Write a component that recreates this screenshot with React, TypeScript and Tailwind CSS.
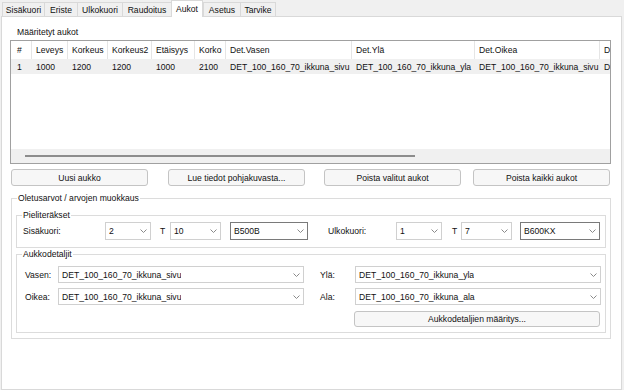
import React from "react";

const Chevron = () => (
  <svg width="7" height="4" viewBox="0 0 7 4" className="shrink-0">
    <polyline points="0.5,0.5 3.5,3.5 6.5,0.5" fill="none" stroke="#8a8a8a" strokeWidth="1" />
  </svg>
);

function Combo({ value, className, dark }: { value: string; className: string; dark?: boolean }) {
  return (
    <div
      className={`flex items-center justify-between bg-white border pl-[3px] pr-[3px] ${
        dark ? "border-[#7a7a7a]" : "border-[#d0d0d0]"
      } ${className}`}
    >
      <span className="truncate">{value}</span>
      <Chevron />
    </div>
  );
}

function Btn({ label, className }: { label: string; className: string }) {
  return (
    <div
      className={`flex items-center justify-center bg-[#f7f7f7] border border-[#c4c4c4] rounded-[3px] ${className}`}
    >
      {label}
    </div>
  );
}

const tabs: { label: string; w: string; sel?: boolean }[] = [
  { label: "Sisäkuori", w: "w-[42px]" },
  { label: "Eriste", w: "w-[33px]" },
  { label: "Ulkokuori", w: "w-[45px]" },
  { label: "Raudoitus", w: "w-[49px]" },
  { label: "Aukot", w: "w-[32px]", sel: true },
  { label: "Asetus", w: "w-[37px]" },
  { label: "Tarvike", w: "w-[36px]" },
];

const cols = ["#", "Leveys", "Korkeus", "Korkeus2", "Etäisyys", "Korko", "Det.Vasen", "Det.Ylä", "Det.Oikea", "D"];
const row = ["1", "1000", "1200", "1200", "1000", "2100", "DET_100_160_70_ikkuna_sivu", "DET_100_160_70_ikkuna_yla", "DET_100_160_70_ikkuna_sivu", "D"];
const gridCols = "grid grid-cols-[21px_36px_40px_44px_43px_31px_126px_123px_125px_1fr]";

export default function App() {
  return (
    <div
      className="w-[624px] h-[390px] bg-[#f0f0f0] overflow-hidden text-[8.6px] leading-[12px] text-[#111]"
      style={{ fontFamily: '"Liberation Sans", Arial, sans-serif' }}
    >
      {/* tab bar */}
      <div className="flex items-end h-[16px] pl-[2px]">
        {tabs.map((t, i) =>
          t.sel ? (
            <div
              key={i}
              className={`${t.w} h-[17px] -mb-px relative z-10 bg-white border border-b-0 border-[#d9d9d9] flex items-center justify-center pb-[1px]`}
            >
              {t.label}
            </div>
          ) : (
            <div
              key={i}
              className={`${t.w} h-[14px] bg-[#f0f0f0] border-t border-l ${
                i === tabs.length - 1 ? "border-r" : ""
              } border-[#d9d9d9] flex items-center justify-center`}
            >
              {t.label}
            </div>
          )
        )}
      </div>

      {/* page */}
      <div className="ml-[1px] w-[621px] h-[374px] bg-white border border-[#d9d9d9] flex flex-col">
        <div className="mt-[9px] ml-[15px] h-[12px]">Määritetyt aukot</div>

        {/* table */}
        <div className="mt-[2px] ml-[8px] w-[601px] h-[124px] border border-[#a0a0a0] bg-white flex flex-col">
          <div className={`${gridCols} h-[18px] shrink-0`}>
            {cols.map((c, i) => (
              <div
                key={i}
                className={`flex items-center overflow-hidden whitespace-nowrap ${
                  i === 0 ? "pl-[6px]" : "pl-[4px]"
                } ${i < cols.length - 1 ? "border-r border-[#e5e5e5]" : ""}`}
              >
                {c}
              </div>
            ))}
          </div>
          <div className={`${gridCols} h-[15px] shrink-0 bg-[#f0f0f0]`}>
            {row.map((c, i) => (
              <div
                key={i}
                className={`flex items-center overflow-hidden whitespace-nowrap ${i === 0 ? "pl-[6px]" : "pl-[4px]"}`}
              >
                {c}
              </div>
            ))}
          </div>
          <div className="flex-1" />
          <div className="h-[14px] shrink-0 bg-[#f0f0f0] flex items-center">
            <div className="ml-[14px] w-[390px] h-[2px] bg-[#8c8c8c]" />
          </div>
        </div>

        {/* buttons */}
        <div className="flex mt-[5px] ml-[9px] h-[17px]">
          <Btn label="Uusi aukko" className="w-[137px] h-[17px]" />
          <Btn label="Lue tiedot pohjakuvasta..." className="ml-[20px] w-[137px] h-[17px]" />
          <Btn label="Poista valitut aukot" className="ml-[19px] w-[137px] h-[17px]" />
          <Btn label="Poista kaikki aukot" className="ml-[12px] w-[137px] h-[17px]" />
        </div>

        {/* outer group */}
        <div className="mt-[12px] ml-[9px] w-[600px] border border-[#dcdcdc] flex flex-col pl-[4px] pr-[4px] pb-[5px]">
          <div className="-mt-[7px] ml-[1px] px-[1px] w-fit bg-white h-[12px]">Oletusarvot / arvojen muokkaus</div>

          {/* Pieliteräkset */}
          <div className="mt-[11px] w-[590px] border border-[#dcdcdc] flex flex-col pb-[7px]">
            <div className="-mt-[7px] ml-[5px] px-[1px] w-fit bg-white h-[12px]">Pieliteräkset</div>
            <div className="mt-[1px] flex items-center h-[18px]">
              <div className="ml-[6px] w-[82px]">Sisäkuori:</div>
              <Combo value="2" className="w-[46px] h-[18px]" />
              <div className="w-[19px] pl-[9px]">T</div>
              <Combo value="10" className="w-[51px] h-[18px]" />
              <Combo value="B500B" dark className="ml-[9px] w-[78px] h-[18px]" />
              <div className="ml-[20px] w-[68px]">Ulkokuori:</div>
              <Combo value="1" className="w-[46px] h-[18px]" />
              <div className="w-[19px] pl-[10px]">T</div>
              <Combo value="7" className="w-[51px] h-[18px]" />
              <Combo value="B600KX" dark className="ml-[8px] w-[80px] h-[18px]" />
            </div>
          </div>

          {/* Aukkodetaljit */}
          <div className="mt-[6px] w-[590px] border border-[#dcdcdc] flex flex-col pb-[5px]">
            <div className="-mt-[7px] ml-[5px] px-[1px] w-fit bg-white h-[12px]">Aukkodetaljit</div>
            <div className="mt-[6px] flex items-center h-[17px]">
              <div className="ml-[8px] w-[33px]">Vasen:</div>
              <Combo value="DET_100_160_70_ikkuna_sivu" className="w-[246px] h-[17px]" />
              <div className="ml-[16px] w-[35px]">Ylä:</div>
              <Combo value="DET_100_160_70_ikkuna_yla" className="w-[246px] h-[17px]" />
            </div>
            <div className="mt-[5px] flex items-center h-[17px]">
              <div className="ml-[8px] w-[33px]">Oikea:</div>
              <Combo value="DET_100_160_70_ikkuna_sivu" className="w-[246px] h-[17px]" />
              <div className="ml-[16px] w-[35px]">Ala:</div>
              <Combo value="DET_100_160_70_ikkuna_ala" className="w-[246px] h-[17px]" />
            </div>
            <div className="mt-[6px] flex">
              <Btn label="Aukkodetaljien määritys..." className="ml-[337px] w-[246px] h-[16px]" />
            </div>
          </div>
        </div>
      </div>
    </div>
  );
}
